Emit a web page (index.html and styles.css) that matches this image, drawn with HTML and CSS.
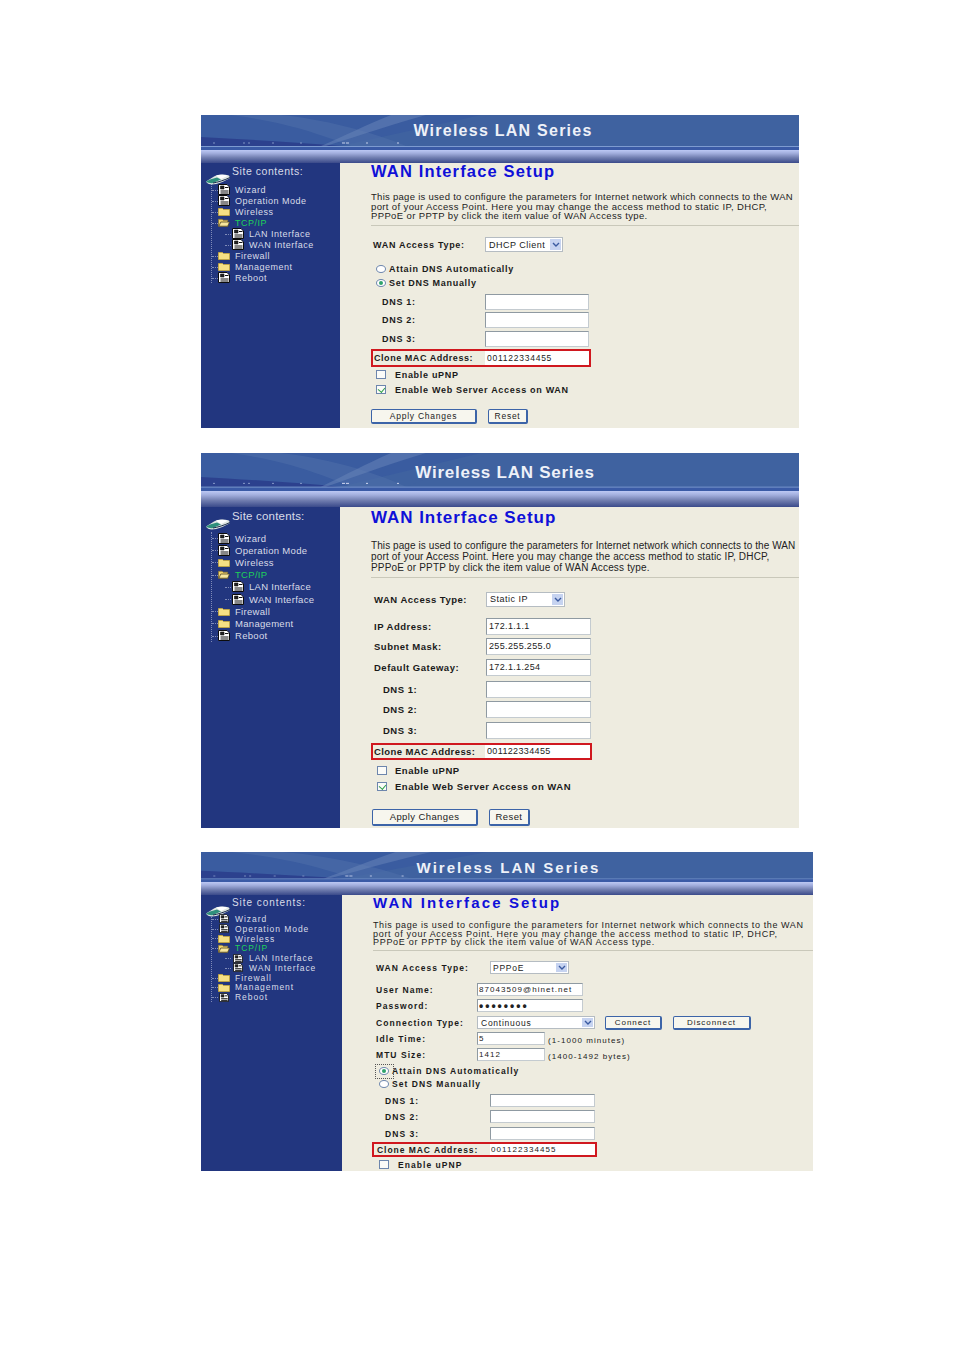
FILE: index.html
```html
<!DOCTYPE html>
<html lang="en">
<head>
<meta charset="utf-8">
<title>WAN Interface Setup</title>
<link rel="stylesheet" href="styles.css">
</head>
<body>
<svg class="defs" aria-hidden="true">
  <symbol id="doc" viewBox="0 0 12 11">
    <path d="M0.5 0.5H9L11.5 3V10.5H0.5Z" fill="#fff" stroke="#0c0c0c" stroke-width="1"/>
    <path d="M2.5 2H6V5H2.5Z" fill="#222" stroke="#111" stroke-width="0.6"/>
    <path d="M7 3.5H10.5M2.5 7H10.5M2.5 9H10.5" fill="none" stroke="#111" stroke-width="1.2"/>
  </symbol>
  <symbol id="folder" viewBox="0 0 12 9">
    <path d="M0.5 1.5H4.5L5.5 2.5H11.5V8.5H0.5Z" fill="#f6e084" stroke="#c9a93a" stroke-width="0.8"/>
  </symbol>
  <symbol id="folder-open" viewBox="0 0 13 9">
    <path d="M0.5 1H4.5L5.5 2H10.5V8.5H0.5Z" fill="#f3d56c" stroke="#8a7430" stroke-width="0.8"/>
    <path d="M1 8.5L3 4H12.5L10.5 8.5Z" fill="#f8e79c" stroke="#4a4020" stroke-width="0.8"/>
  </symbol>
  <symbol id="router" viewBox="0 0 26 12">
    <path d="M1 8.5L9 3.5C12 1.5 18 0.5 24 2.5L25 5C20 8 12 11.5 7 11.5C4 11.5 2 10.5 1 8.5Z" fill="#dfe6e2"/>
    <path d="M1 8.5C3 10 6 10.5 8 10L16 6.5L12 4.5L5 6.5Z" fill="#2f8f7c"/>
    <path d="M8 10C12 9.5 20 7 25 4.5" fill="none" stroke="#1c2c4c" stroke-width="1"/>
    <path d="M11 2.8C14 1.6 19 1.4 23 2.8L16 6Z" fill="#fff"/>
  </symbol>
  <symbol id="banner-art" viewBox="0 0 598 35" preserveAspectRatio="none">
    <path d="M0 0H280L140 31H0Z" fill="#3a5ca0"/>
    <path d="M0 22C40 24 90 27 140 31H0Z" fill="#2c418e"/>
    <path d="M80 0C120 4 170 16 205 31H150C120 20 90 8 30 0Z" fill="#4f6faa" opacity="0.55"/>
    <path d="M125 31C160 20 195 8 225 0H190C165 10 145 20 120 31Z" fill="#6a86b9" opacity="0.5"/>
    <path d="M205 31L290 0H598V31Z" fill="#3f62a0"/>
    <g fill="#7f93c4">
      <rect x="12" y="27.5" width="2" height="1"/><rect x="42" y="27.5" width="2" height="1"/>
      <rect x="47" y="27.5" width="2" height="1"/><rect x="71" y="27.5" width="2" height="1"/>
      <rect x="99" y="27.5" width="2" height="1"/>
    </g>
    <g fill="#c5cfea">
      <rect x="141" y="27.5" width="3" height="1"/><rect x="145" y="27.5" width="3" height="1"/>
      <rect x="165" y="27.5" width="2" height="1"/><rect x="196" y="27.5" width="2" height="1"/>
    </g>
    <rect x="0" y="31" width="598" height="1" fill="#7d9bd0"/>
    <rect x="0" y="32" width="598" height="3" fill="#3a5aa6"/>
  </symbol>
  <symbol id="arrow" viewBox="0 0 8 5">
    <path d="M1 1L4 4L7 1" fill="none" stroke="#3a5aa0" stroke-width="1.4"/>
  </symbol>
</svg>

<section class="shot shot-a">
  <header class="banner">
    <svg class="banner-art"><use href="#banner-art"/></svg>
    <h1>Wireless LAN Series</h1>
  </header>
  <div class="band"></div>
  <div class="body">
    <nav class="side">
      <div class="site"><svg class="router"><use href="#router"/></svg><span>Site contents:</span></div>
      <ul class="tree">
        <li><svg class="ico"><use href="#doc"/></svg>Wizard</li>
        <li><svg class="ico"><use href="#doc"/></svg>Operation Mode</li>
        <li><svg class="ico fold"><use href="#folder"/></svg>Wireless</li>
        <li class="on"><svg class="ico fold"><use href="#folder-open"/></svg>TCP/IP</li>
        <li class="sub"><svg class="ico"><use href="#doc"/></svg>LAN Interface</li>
        <li class="sub"><svg class="ico"><use href="#doc"/></svg>WAN Interface</li>
        <li><svg class="ico fold"><use href="#folder"/></svg>Firewall</li>
        <li><svg class="ico fold"><use href="#folder"/></svg>Management</li>
        <li><svg class="ico"><use href="#doc"/></svg>Reboot</li>
      </ul>
    </nav>
    <main class="main">
      <h2>WAN Interface Setup</h2>
      <p class="intro">This page is used to configure the parameters for Internet network which connects to the WAN<br><span>port of your Access Point. Here you may change the access method to static IP, DHCP,<br>PPPoE or PPTP by click the item value of WAN Access type.</span></p>
      <hr class="rule">
      <form class="form">
        <div class="row"><label>WAN Access Type:</label><span class="select sel-dhcp">DHCP Client<i class="drop"><svg><use href="#arrow"/></svg></i></span></div>
        <div class="row mt-12"><span class="radio"></span><label class="opt">Attain DNS Automatically</label></div>
        <div class="row mt-2"><span class="radio checked"></span><label class="opt">Set DNS Manually</label></div>
        <div class="row mt-7"><label class="dns">DNS 1:</label><input class="field" type="text"></div>
        <div class="row mt-6"><label class="dns">DNS 2:</label><input class="field" type="text"></div>
        <div class="row mt-7"><label class="dns">DNS 3:</label><input class="field" type="text"></div>
        <div class="row mt-7"><div class="clone"><label>Clone MAC Address:</label><input class="field" type="text" value="001122334455"></div></div>
        <div class="row mt-5"><span class="check"></span><label class="chk">Enable uPNP</label></div>
        <div class="row mt-3"><span class="check checked"></span><label class="chk">Enable Web Server Access on WAN</label></div>
        <div class="row mt-15 btns"><button type="button" class="btn apply">Apply Changes</button><button type="button" class="btn reset">Reset</button></div>
      </form>
    </main>
  </div>
</section>

<section class="shot shot-b">
  <header class="banner">
    <svg class="banner-art"><use href="#banner-art"/></svg>
    <h1>Wireless LAN Series</h1>
  </header>
  <div class="band"></div>
  <div class="body">
    <nav class="side">
      <div class="site"><svg class="router"><use href="#router"/></svg><span>Site contents:</span></div>
      <ul class="tree">
        <li><svg class="ico"><use href="#doc"/></svg>Wizard</li>
        <li><svg class="ico"><use href="#doc"/></svg>Operation Mode</li>
        <li><svg class="ico fold"><use href="#folder"/></svg>Wireless</li>
        <li class="on"><svg class="ico fold"><use href="#folder-open"/></svg>TCP/IP</li>
        <li class="sub"><svg class="ico"><use href="#doc"/></svg>LAN Interface</li>
        <li class="sub"><svg class="ico"><use href="#doc"/></svg>WAN Interface</li>
        <li><svg class="ico fold"><use href="#folder"/></svg>Firewall</li>
        <li><svg class="ico fold"><use href="#folder"/></svg>Management</li>
        <li><svg class="ico"><use href="#doc"/></svg>Reboot</li>
      </ul>
    </nav>
    <main class="main">
      <h2>WAN Interface Setup</h2>
      <p class="intro">This page is used to configure the parameters for Internet network which connects to the WAN<br><span>port of your Access Point. Here you may change the access method to static IP, DHCP,<br>PPPoE or PPTP by click the item value of WAN Access type.</span></p>
      <hr class="rule">
      <form class="form">
        <div class="row"><label>WAN Access Type:</label><span class="select sel-static">Static IP<i class="drop"><svg><use href="#arrow"/></svg></i></span></div>
        <div class="row mt-15"><label>IP Address:</label><input class="field" type="text" value="172.1.1.1"></div>
        <div class="row mt-8"><label>Subnet Mask:</label><input class="field" type="text" value="255.255.255.0"></div>
        <div class="row mt-9"><label>Default Gateway:</label><input class="field" type="text" value="172.1.1.254"></div>
        <div class="row mt-10"><label class="dns">DNS 1:</label><input class="field" type="text"></div>
        <div class="row mt-8"><label class="dns">DNS 2:</label><input class="field" type="text"></div>
        <div class="row mt-9"><label class="dns">DNS 3:</label><input class="field" type="text"></div>
        <div class="row mt-9"><div class="clone"><label>Clone MAC Address:</label><input class="field" type="text" value="001122334455"></div></div>
        <div class="row mt-7"><span class="check"></span><label class="chk">Enable uPNP</label></div>
        <div class="row mt-4"><span class="check checked"></span><label class="chk">Enable Web Server Access on WAN</label></div>
        <div class="row mt-18 btns"><button type="button" class="btn apply">Apply Changes</button><button type="button" class="btn reset">Reset</button></div>
      </form>
    </main>
  </div>
</section>

<section class="shot shot-c">
  <header class="banner">
    <svg class="banner-art"><use href="#banner-art"/></svg>
    <h1>Wireless LAN Series</h1>
  </header>
  <div class="band"></div>
  <div class="body">
    <nav class="side">
      <div class="site"><svg class="router"><use href="#router"/></svg><span>Site contents:</span></div>
      <ul class="tree">
        <li><svg class="ico"><use href="#doc"/></svg>Wizard</li>
        <li><svg class="ico"><use href="#doc"/></svg>Operation Mode</li>
        <li><svg class="ico fold"><use href="#folder"/></svg>Wireless</li>
        <li class="on"><svg class="ico fold"><use href="#folder-open"/></svg>TCP/IP</li>
        <li class="sub"><svg class="ico"><use href="#doc"/></svg>LAN Interface</li>
        <li class="sub"><svg class="ico"><use href="#doc"/></svg>WAN Interface</li>
        <li><svg class="ico fold"><use href="#folder"/></svg>Firewall</li>
        <li><svg class="ico fold"><use href="#folder"/></svg>Management</li>
        <li><svg class="ico"><use href="#doc"/></svg>Reboot</li>
      </ul>
    </nav>
    <main class="main">
      <h2>WAN Interface Setup</h2>
      <p class="intro">This page is used to configure the parameters for Internet network which connects to the WAN<br><span>port of your Access Point. Here you may change the access method to static IP, DHCP,<br>PPPoE or PPTP by click the item value of WAN Access type.</span></p>
      <hr class="rule">
      <form class="form">
        <div class="row"><label class="wide">WAN Access Type:</label><span class="select sel-pppoe">PPPoE<i class="drop"><svg><use href="#arrow"/></svg></i></span></div>
        <div class="row mt-10"><label>User Name:</label><input class="field f-user" type="text" value="87043509@hinet.net"></div>
        <div class="row mt-4"><label>Password:</label><input class="field f-user pass" type="text" value="••••••••"></div>
        <div class="row mt-5"><label>Connection Type:</label><span class="select sel-conn">Continuous<i class="drop"><svg><use href="#arrow"/></svg></i></span><button type="button" class="btn connect">Connect</button><button type="button" class="btn disconnect">Disconnect</button></div>
        <div class="row mt-4"><label>Idle Time:</label><input class="field f-short" type="text" value="5"><span class="hint">(1-1000 minutes)</span></div>
        <div class="row mt-4"><label>MTU Size:</label><input class="field f-short" type="text" value="1412"><span class="hint">(1400-1492 bytes)</span></div>
        <div class="row mt-4"><span class="radio checked focus"></span><label class="opt">Attain DNS Automatically</label></div>
        <div class="row mt-1"><span class="radio"></span><label class="opt">Set DNS Manually</label></div>
        <div class="row mt-5"><label class="dns wide">DNS 1:</label><input class="field" type="text"></div>
        <div class="row mt-4"><label class="dns wide">DNS 2:</label><input class="field" type="text"></div>
        <div class="row mt-5"><label class="dns wide">DNS 3:</label><input class="field" type="text"></div>
        <div class="row mt-4"><div class="clone"><label>Clone MAC Address:</label><input class="field" type="text" value="001122334455"></div></div>
        <div class="row mt-3"><span class="check"></span><label class="chk">Enable uPNP</label></div>
      </form>
    </main>
  </div>
</section>
</body>
</html>
```
FILE: styles.css
```css
* { box-sizing: border-box; }
html, body { margin: 0; padding: 0; background: #fff; }
body {
  padding: 115px 0 0 201px;
  font-family: "Liberation Sans", Arial, sans-serif;
  color: #1a1a1a;
}
.defs { display: none; }

.shot { overflow: hidden; width: 598px; }
.shot-a { height: 313px; --banner: 35px; --band: 13px; --side: 139px; }
.shot-b { height: 375px; margin-top: 25px; --banner: 38px; --band: 16px; --side: 139px; }
.shot-c { height: 319px; width: 612px; margin-top: 24px; --banner: 30px; --band: 13px; --side: 141px; }

.banner { position: relative; height: var(--banner); background: #3f62a0; display: flex; align-items: center; justify-content: center; }
.banner-art { position: absolute; inset: 0; width: 100%; height: 100%; }
.banner h1 { position: relative; margin: 0 0 3px 6px; font-size: 16px; font-weight: 700; color: #eef1f8; letter-spacing: 1.25px; white-space: nowrap; }
.shot-b .banner h1 { font-size: 17px; letter-spacing: 0.75px; margin: 1px 0 0 10px; }
.shot-c .banner h1 { font-size: 15px; letter-spacing: 2px; margin: 0 0 0 3px; }

.band { height: var(--band); background: linear-gradient(#bcc8f4 0, #a2aedd 25%, #6f7cae 60%, #3a4a8a 100%); }

.body { display: flex; height: 100%; }
.side { flex: none; width: var(--side); background: #22367f; color: #d9dce8; font-size: 9px; letter-spacing: 0.5px; }
.main { flex: 1; background: #eeece0; padding-left: 31px; }

.site { display: flex; align-items: flex-start; height: 21px; padding: 2px 0 0 4px; }
.site span { font-size: 10.5px; letter-spacing: 0.55px; margin-left: 1px; white-space: nowrap; }
.router { width: 26px; height: 12px; margin-top: 8px; flex: none; }

.tree { list-style: none; margin: 0 0 0 10px; padding: 0; border-left: 1px dotted #7f8bb8; }
.tree li { position: relative; display: flex; align-items: center; height: 11px; padding-left: 6px; white-space: nowrap; }
.tree li::before { content: ""; position: absolute; left: 0; top: 50%; width: 6px; border-top: 1px dotted #7f8bb8; }
.tree .sub { padding-left: 20px; }
.tree .sub::before { left: 13px; }
.tree .on { color: #1fd05a; }
.ico { flex: none; width: 12px; height: 11px; margin-right: 5px; }

.shot-b .site { height: 25px; padding-top: 3px; }
.shot-b .site span { font-size: 11.5px; letter-spacing: 0.2px; }
.shot-b .tree li { height: 12.2px; }
.shot-b .side { font-size: 9.5px; letter-spacing: 0.3px; }

.shot-c .site { height: 19px; }
.shot-c .site span { font-size: 10px; letter-spacing: 0.95px; }
.shot-c .tree li { height: 9.8px; }
.shot-c .side { font-size: 8.5px; letter-spacing: 0.95px; }
.shot-c .ico { height: 9px; }

h2 { margin: 0; font-size: 16.5px; line-height: 17px; font-weight: 700; color: #0f10d8; letter-spacing: 1.15px; white-space: nowrap; }
.shot-b h2 { font-size: 17px; line-height: 20px; padding-top: 1px; letter-spacing: 0.95px; }
.shot-c h2 { font-size: 15px; line-height: 15px; letter-spacing: 2.15px; }

.intro { margin: 12px 0 0; font-size: 9.5px; line-height: 9.5px; letter-spacing: 0.28px; white-space: nowrap; color: #222; }
.intro span { letter-spacing: 0.37px; }
.shot-b .intro { margin-top: 12px; font-size: 10px; line-height: 11px; letter-spacing: 0.08px; }
.shot-b .intro span { letter-spacing: 0.17px; }
.shot-c .intro { margin-top: 11px; font-size: 9px; line-height: 8.5px; letter-spacing: 0.6px; }
.shot-c .intro span { letter-spacing: 0.7px; }

.rule { margin: 4px 0 0; border: 0; border-top: 1px solid #c9c8ba; }
.shot-c .rule { margin-top: 3px; }
.form { padding: 13px 0 0 2px; display: flex; flex-direction: column; font-size: 9px; font-weight: 700; letter-spacing: 0.7px; }
.shot-b .form { padding: 15px 0 0 3px; font-size: 9.5px; letter-spacing: 0.5px; }
.shot-c .form { padding: 11px 0 0 3px; font-size: 8.5px; letter-spacing: 1.05px; }

.row { display: flex; align-items: center; height: 12px; flex: none; white-space: nowrap; }
.row label { display: block; width: 112px; flex: none; }
.row label.dns { padding-left: 9px; }
.row label.opt { width: auto; margin-left: 3px; }
.row label.chk { width: auto; margin-left: 9px; }
.shot-b .row label.chk { margin-left: 8px; }
.shot-c .row > label { width: 101px; }
.shot-c .row > label.wide { width: 114px; }
.shot-c .row > label.opt, .shot-c .row > label.chk { width: auto; }

.mt-1 { margin-top: 1px; } .mt-2 { margin-top: 2px; } .mt-3 { margin-top: 3px; }
.mt-4 { margin-top: 4px; } .mt-5 { margin-top: 5px; } .mt-6 { margin-top: 6px; }
.mt-7 { margin-top: 7px; } .mt-8 { margin-top: 8px; } .mt-9 { margin-top: 9px; }
.mt-10 { margin-top: 10px; } .mt-12 { margin-top: 12px; }
.mt-15 { margin-top: 15px; } .mt-18 { margin-top: 19px; }

.field {
  flex: none; width: 104px; height: 16px; padding: 0 2px; margin: 0;
  border: 1px solid #8f9aa2; border-right-color: #c4cbd0; border-bottom-color: #c4cbd0;
  background: #fff; font: 400 8.5px "Liberation Sans", Arial, sans-serif; letter-spacing: 0.75px; color: #222; outline: 0;
}
.shot-b .field { width: 105px; height: 17px; font-size: 9px; letter-spacing: 0.35px; }
.shot-c .field { width: 105px; height: 13px; padding: 0 1px; font-size: 8px; letter-spacing: 1.05px; }
.shot-c .field.f-user { width: 106px; }
.shot-c .field.f-short { width: 68px; }
.shot-c .field.pass { font-size: 12px; font-weight: 700; letter-spacing: 2px; }

.select {
  flex: none; position: relative; display: flex; align-items: center; height: 15px; padding-left: 3px;
  background: #fff; border: 1px solid #b5bcc2; font-weight: 400; font-size: 9px; letter-spacing: 0.5px;
}
.drop { position: absolute; right: 1px; top: 1px; bottom: 1px; width: 11px; background: #c6d3f0; display: flex; align-items: center; justify-content: center; }
.drop svg { width: 8px; height: 5px; }
.sel-dhcp { width: 78px; }
.sel-static { width: 79px; }
.sel-pppoe { width: 79px; height: 13px; padding-left: 2px; font-size: 8.5px; letter-spacing: 0.75px; }
.sel-conn { width: 118px; height: 13px; margin-right: 10px; padding-left: 3px; font-size: 8.5px; letter-spacing: 0.75px; }

.radio { flex: none; position: relative; width: 10px; height: 8px; margin-left: 3px; border: 1px solid #6d86ad; border-radius: 50%; background: #fff; }
.radio.checked::after { content: ""; position: absolute; left: 2px; top: 1px; width: 4px; height: 4px; border-radius: 50%; background: #2fa36b; }
.radio.focus::before { content: ""; position: absolute; left: -5px; top: -4px; width: 17px; height: 13px; border: 1px dotted #555; }
.check { flex: none; width: 10px; height: 9px; margin-left: 3px; border: 1px solid #6d86ad; background: #fbfbf8; position: relative; }
.check.checked::after { content: ""; position: absolute; left: 2px; top: 0; width: 4px; height: 5px; border: solid #2fa04a; border-width: 0 1.5px 1.5px 0; transform: rotate(40deg); }

.clone { flex: none; display: flex; align-items: center; width: 220px; height: 18px; margin-left: -2px; border: 2px solid #d0181f; background: #eeece0; letter-spacing: 0.55px; }
.clone label { width: 112px; padding-left: 1px; flex: none; }
.clone .field { width: 104px; height: 14px; border: 0; background: #fff; flex: 1; }
.shot-b .clone { width: 221px; height: 17px; margin-left: -3px; letter-spacing: 0.4px; }
.shot-b .clone .field { height: 13px; }
.shot-c .clone { width: 225px; height: 15px; margin-left: -4px; letter-spacing: 0.95px; }
.shot-c .clone label { width: 116px; padding-left: 3px; }
.shot-c .clone .field { height: 11px; }

.btn {
  flex: none; height: 15px; padding: 0; margin: 0; background: #f7f6ee; color: #222;
  border: 1px solid #3c64a8; border-right-width: 2px; border-bottom-width: 2px; border-radius: 2px;
  font: 400 8.5px "Liberation Sans", Arial, sans-serif; letter-spacing: 0.75px;
}
.btns { margin-left: -2px; }
.apply { width: 106px; margin-right: 11px; }
.reset { width: 40px; }
.shot-b .btn { height: 17px; font-size: 9.5px; letter-spacing: 0.4px; }
.shot-b .reset { width: 41px; }
.connect { width: 57px; height: 14px; margin-right: 11px; }
.disconnect { width: 78px; height: 14px; }
.shot-c .btn { font-size: 8px; letter-spacing: 0.95px; }

.hint { margin-left: 3px; margin-top: 3px; font-weight: 400; font-size: 8px; letter-spacing: 1.05px; }
```
